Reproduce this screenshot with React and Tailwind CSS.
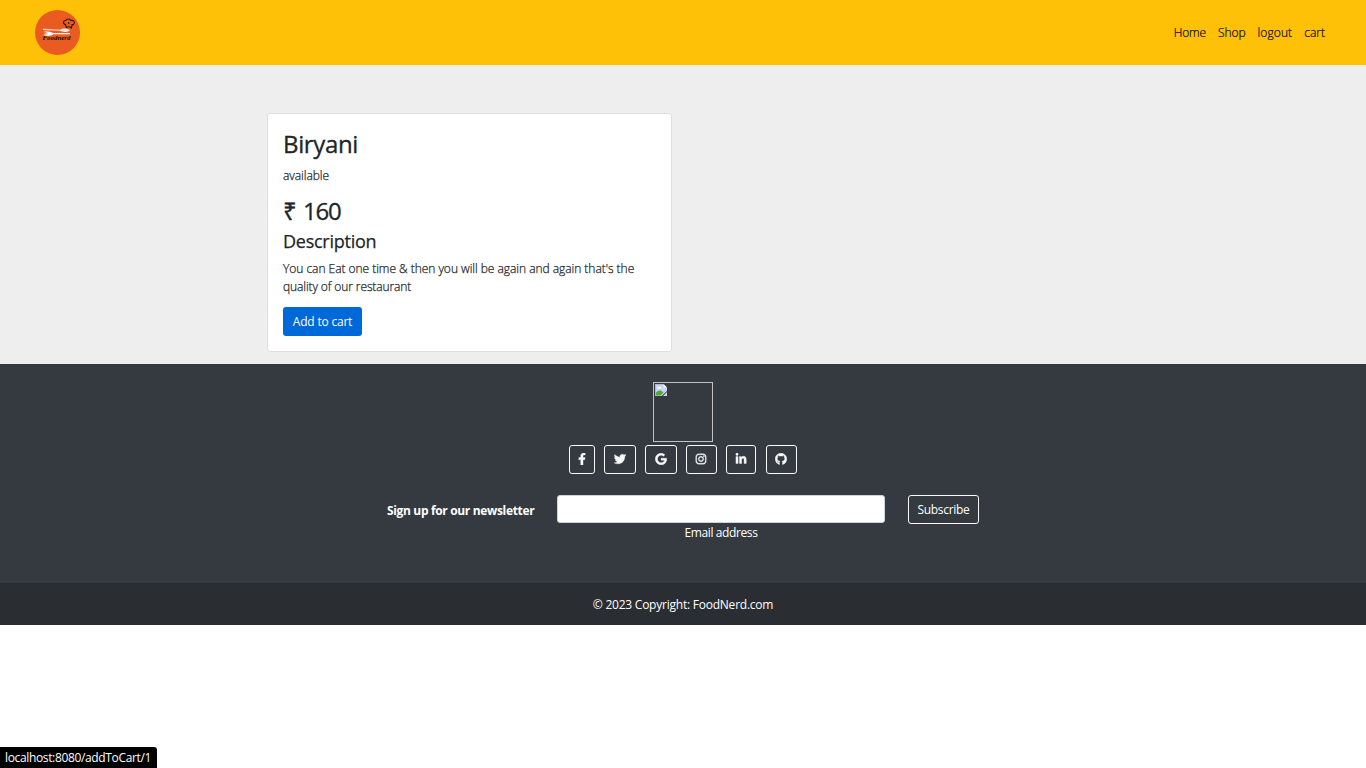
import React from "react";
import { FaFacebookF, FaTwitter, FaGoogle, FaInstagram, FaLinkedinIn, FaGithub } from "react-icons/fa";

function Logo() {
  return (
    <svg viewBox="0 0 45 45" className="h-[45px] w-[45px]">
      <circle cx="22.5" cy="22.5" r="22.5" fill="#e95b20" />
      <g fill="none" stroke="#2b1712" strokeWidth="1.1" strokeLinecap="round">
        <path d="M30.500 14.500c-3-0.500-2.500-4 0.200-4 1-2 4.300-2 5 0 2.800-0.700 4.500 1.500 3.300 3.300-0.500 0.800-1.500 1-2 0.800" />
        <path d="M30.500 14.500l0.800 3c1.700-1 3.700-0.700 5 0.500l1-3.500M33.500 12.500l0.500 1.200" />
      </g>
      <path d="M8 18.800l17 1c2-1.600 7-1.800 10 0.400-1.500 2.200-8 2.200-10 0.600L8 20z" fill="#f6e5de" />
      <path d="M8 21.500h5c2.500 0 4 1.200 5.500 1.500H35v1.200H18.500c-2 1.500-6 2.300-10.500 1.300l5-0.800-5-0.500 5-0.600-5-0.700 5-0.500z" fill="#fff" />
      <text x="7.5" y="30.300" textLength="28" lengthAdjust="spacingAndGlyphs" className="fill-[#24100b] font-['Liberation_Serif',serif] text-[6.5px] font-bold italic">Foodnerd</text>
    </svg>
  );
}

function BrokenImage() {
  return (
    <div className="h-[60px] w-[60px] border border-[#c0c0c0] p-px">
      <svg viewBox="0 0 12 12" className="h-3 w-3">
        <path d="M0 0h8.500L12 3.500V7L6.500 12H0z" fill="#c5d4f5" />
        <path d="M0.500 11.500V9c1.500-2 4-3 6-2l2 1.500-3 3z" fill="#50a83a" />
        <path d="M2 4.500c0-1 1-1.500 2-1.200 1-1 2.500-0.300 2.500 1.200z" fill="#fff" />
        <path d="M8.500 0v3.500H12z" fill="#f5f5f5" />
        <path d="M12 8v4H8z" fill="#d5d5d5" />
        <path d="M0.500 12V0.500H8.500" fill="none" stroke="#aeb4bd" strokeWidth="0.800" />
      </svg>
    </div>
  );
}

const socials = [
  { Icon: FaFacebookF, size: "w-[26px] mr-[9px]" },
  { Icon: FaTwitter, size: "w-[32px] mr-[9px]" },
  { Icon: FaGoogle, size: "w-[32px] mr-[9px]" },
  { Icon: FaInstagram, size: "w-[31px] mr-[9px] pr-px" },
  { Icon: FaLinkedinIn, size: "w-[30px] mr-[10px]" },
  { Icon: FaGithub, size: "w-[31px] pr-px" },
];

export default function App() {
  return (
    <div className="flex h-screen flex-col bg-white font-['Open_Sans','Noto_Sans',sans-serif] text-[12px] leading-[18px] text-[#212529]">
      <nav className="flex h-[65px] shrink-0 items-center justify-between bg-[#ffc107] pr-[41px] pl-[35px]">
        <Logo />
        <div className="flex gap-3 pt-px font-light text-black [-webkit-text-stroke:0.2px_#000]">
          <a className="tracking-[-0.1px]">Home</a>
          <a className="tracking-[-0.1px]">Shop</a>
          <a className="tracking-[0.1px]">logout</a>
          <a>cart</a>
        </div>
      </nav>
      <main className="h-[299px] shrink-0 bg-[#eee] pt-12 pl-[267px]">
        <section className="flex h-[239px] w-[405px] flex-col items-start rounded-[3px] border border-[#dfdfdf] bg-white p-[15px]">
          <h3 className="text-[24px] leading-[29px] tracking-[-0.35px] [-webkit-text-stroke:0.3px_#212529]">Biryani</h3>
          <p className="mt-[9px] font-light tracking-[-0.05px] [-webkit-text-stroke:0.25px_#212529]">available</p>
          <h3 className="mt-[11px] text-[24px] leading-[29px] [-webkit-text-stroke:0.3px_#212529]">₹ <span className="tracking-[-1.2px]">160</span></h3>
          <h4 className="mt-[5px] text-[18px] leading-[22px] tracking-[-0.25px] [-webkit-text-stroke:0.25px_#212529]">Description</h4>
          <p className="mt-[8px] font-light tracking-[-0.035px] whitespace-nowrap [-webkit-text-stroke:0.25px_#212529]">
            You can Eat one time &amp; then you will be again and again that's the<br />
            <span className="tracking-[-0.1px]">quality of our restaurant</span>
          </p>
          <button className="mt-[11px] h-[29px] w-[79px] rounded-[3px] bg-[#0069d9] tracking-[-0.2px] text-white">Add to cart</button>
        </section>
      </main>
      <footer className="shrink-0 bg-[#343a40] text-white">
        <div className="flex h-[219px] flex-col items-center pt-[18px]">
          <BrokenImage />
          <div className="mt-[3px] flex">
            {socials.map(({ Icon, size }, i) => (
              <a key={i} className={"flex h-[29px] items-center justify-center rounded-[3px] border border-[#f8f9fa] pb-px text-[#f8f9fa] " + size}>
                <Icon size={12} stroke="currentColor" strokeWidth={14} />
              </a>
            ))}
          </div>
          <form className="mt-[21px] flex w-[592px] items-start">
            <strong className="mt-[7px] mr-[22px] w-[148px] tracking-[-0.34px] whitespace-nowrap">Sign up for our newsletter</strong>
            <label className="flex w-[328px] flex-col items-center">
              <input className="h-[28px] w-full rounded-[3px] border border-[#ced4da] bg-white" />
              <span className="mt-px tracking-[-0.38px]">Email address</span>
            </label>
            <button type="button" className="ml-[23px] h-[29px] w-[71px] rounded-[3px] border border-[#f8f9fa] tracking-[-0.3px]">Subscribe</button>
          </form>
        </div>
        <div className="flex h-[42px] items-center justify-center bg-[#2a2e33] pt-[2px] tracking-[-0.23px]">© 2023 Copyright: FoodNerd.com</div>
      </footer>
      <div className="mt-auto h-[21px] w-[157px] rounded-tr-[3px] bg-black pl-[5px] leading-[21px] tracking-[-0.35px] text-white">localhost:8080/addToCart/1</div>
    </div>
  );
}
